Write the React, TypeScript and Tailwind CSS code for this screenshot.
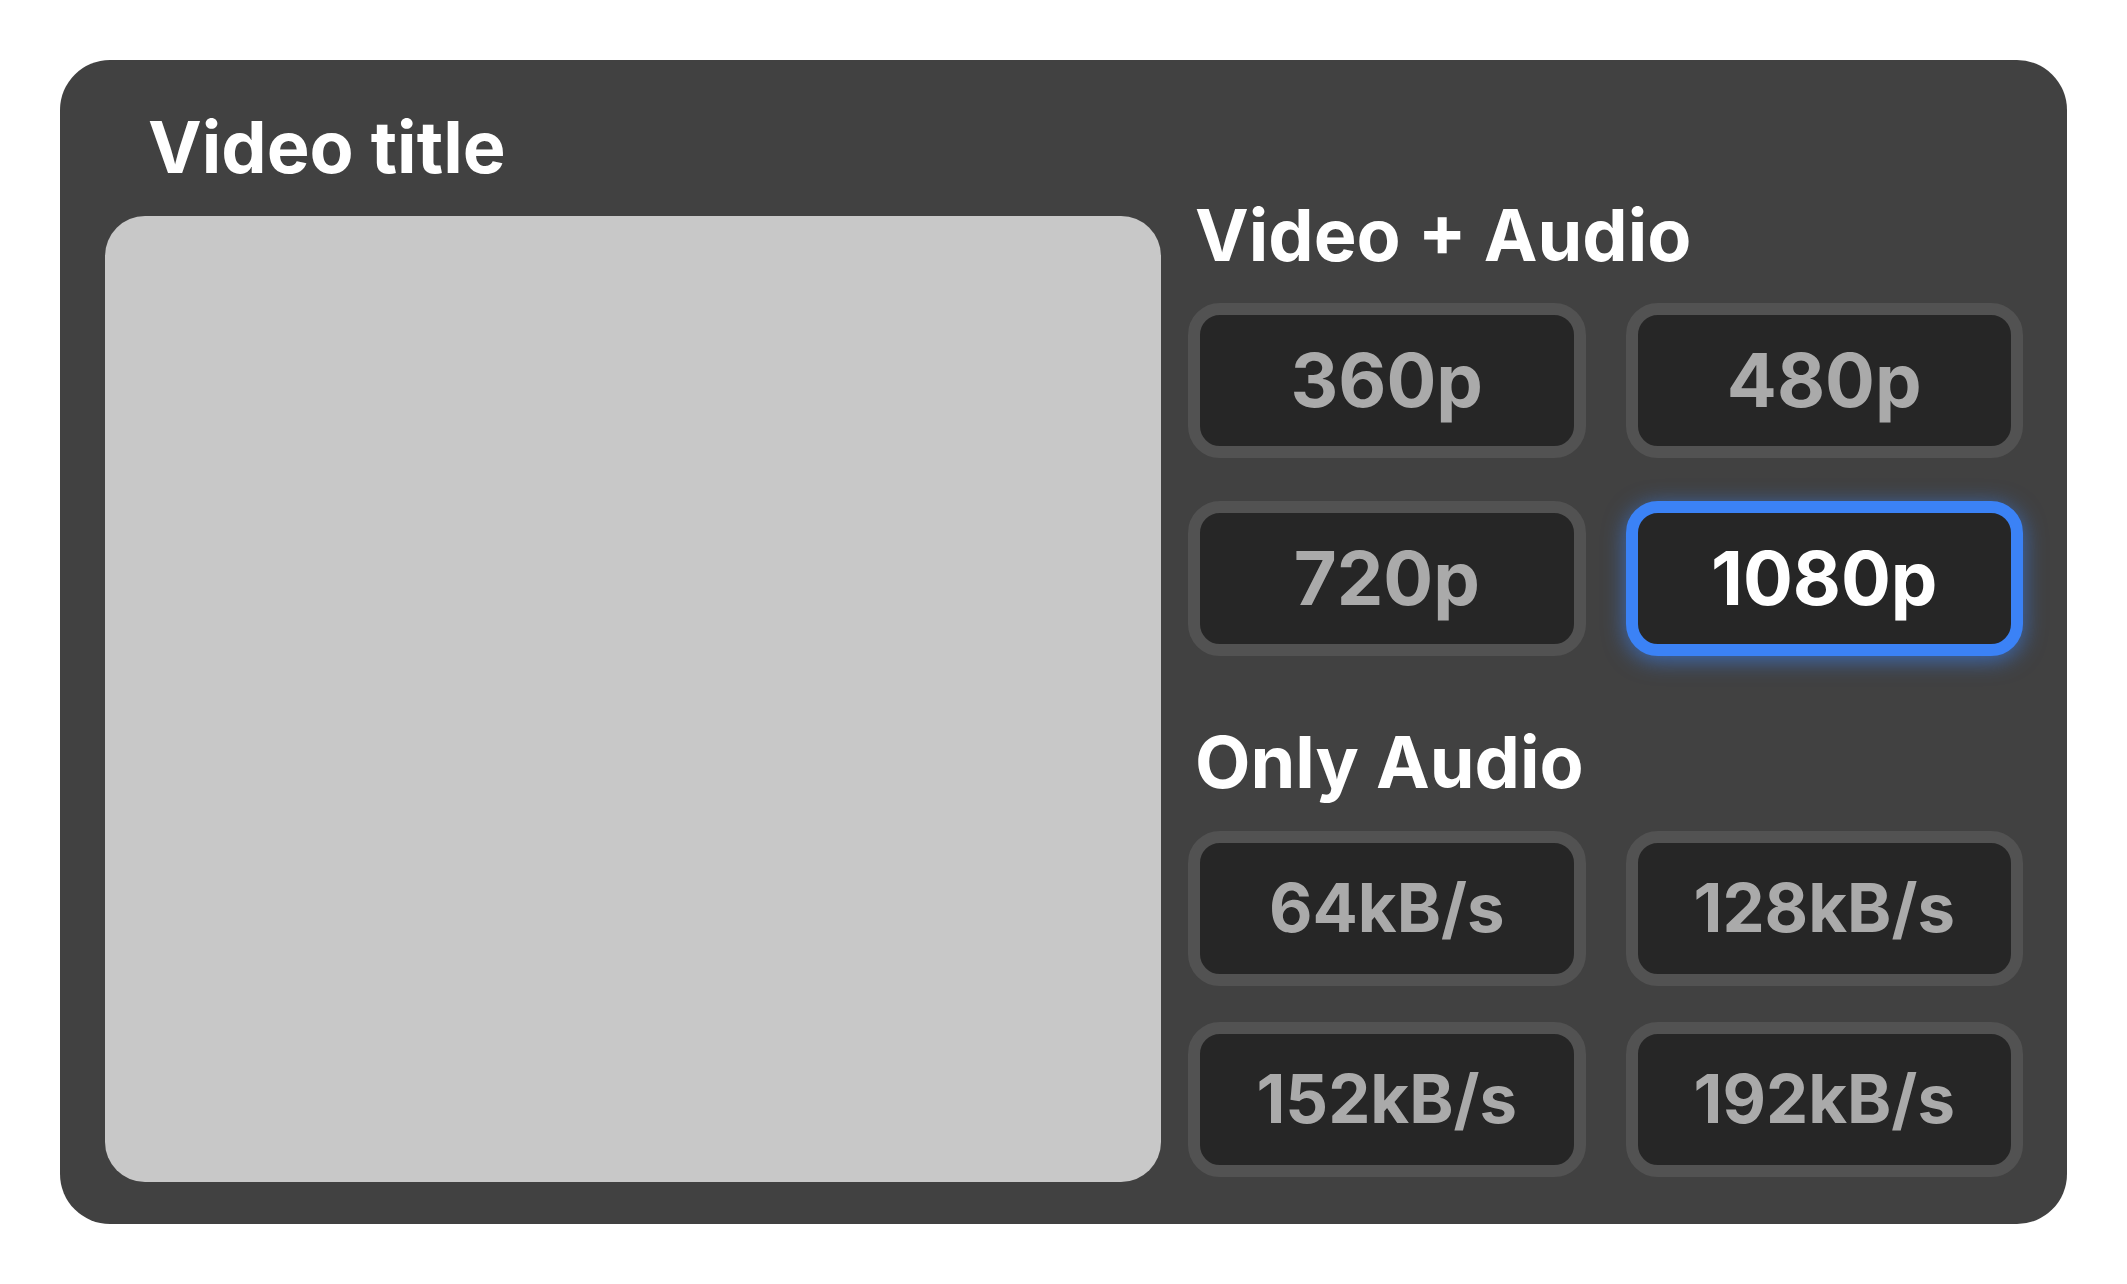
import { useState } from 'react';

const VIDEO_OPTIONS = ['360p', '480p', '720p', '1080p'];
const AUDIO_OPTIONS = ['64kB/s', '128kB/s', '152kB/s', '192kB/s'];

interface OptionButtonProps {
  label: string;
  selected: boolean;
  small?: boolean;
  onClick: () => void;
}

function OptionButton({ label, selected, small, onClick }: OptionButtonProps) {
  return (
    <button
      type="button"
      onClick={onClick}
      className={`flex h-[155px] items-center justify-center rounded-[32px] border-[12px] bg-[#262626] font-bold ${
        small ? 'text-[67px]' : 'text-[74px]'
      } ${
        selected
          ? 'border-[#3b82f6] text-white shadow-[0_4px_22px_rgba(59,130,246,0.65)]'
          : 'border-[#525252] text-[#aaaaaa]'
      }`}
    >
      {label}
    </button>
  );
}

export default function App() {
  const [selected, setSelected] = useState('1080p');

  return (
    <div className="min-h-screen bg-white p-[60px] font-['Inter','Liberation_Sans',sans-serif]">
      <div className="flex h-[1164px] gap-[27px] rounded-[50px] bg-[#414141] pb-[42px] pl-[45px] pr-[44px] pt-[43px]">
        <div className="flex w-[1056px] flex-col">
          <h1 className="pl-[43px] text-[72px] leading-[88px] font-bold text-white">Video title</h1>
          <div className="mt-[25px] flex-1 rounded-[40px] bg-[#c8c8c8]" />
        </div>

        <div className="flex flex-1 flex-col pt-[88px]">
          <h2 className="pl-[7px] text-[72px] leading-[88px] font-bold text-white">Video + Audio</h2>
          <div className="mt-[24px] grid grid-cols-2 gap-x-[40px] gap-y-[43px]">
            {VIDEO_OPTIONS.map((opt) => (
              <OptionButton
                key={opt}
                label={opt}
                selected={selected === opt}
                onClick={() => setSelected(opt)}
              />
            ))}
          </div>

          <h2 className="mt-[62px] pl-[7px] text-[72px] leading-[88px] font-bold text-white">Only Audio</h2>
          <div className="mt-[25px] grid grid-cols-2 gap-x-[40px] gap-y-[36px]">
            {AUDIO_OPTIONS.map((opt) => (
              <OptionButton
                key={opt}
                label={opt}
                small
                selected={selected === opt}
                onClick={() => setSelected(opt)}
              />
            ))}
          </div>
        </div>
      </div>
    </div>
  );
}
